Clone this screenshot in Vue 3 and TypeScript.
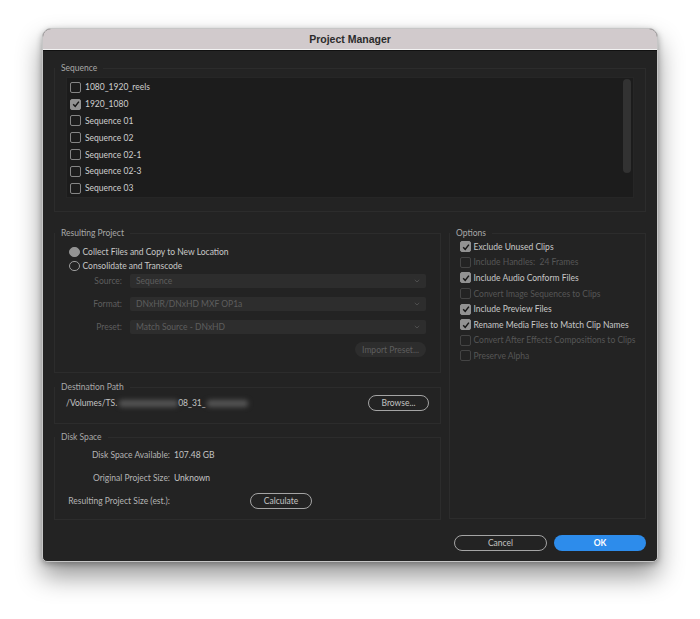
<script setup lang="ts">
interface Opt { label: string; checked: boolean; disabled: boolean }
const sequences = [
  { name: '1080_1920_reels', checked: false },
  { name: '1920_1080', checked: true },
  { name: 'Sequence 01', checked: false },
  { name: 'Sequence 02', checked: false },
  { name: 'Sequence 02-1', checked: false },
  { name: 'Sequence 02-3', checked: false },
  { name: 'Sequence 03', checked: false },
]
const selects = [
  { label: 'Source:', value: 'Sequence' },
  { label: 'Format:', value: 'DNxHR/DNxHD MXF OP1a' },
  { label: 'Preset:', value: 'Match Source - DNxHD' },
]
const options: Opt[] = [
  { label: 'Exclude Unused Clips', checked: true, disabled: false },
  { label: 'Include Handles:  24 Frames', checked: false, disabled: true },
  { label: 'Include Audio Conform Files', checked: true, disabled: false },
  { label: 'Convert Image Sequences to Clips', checked: false, disabled: true },
  { label: 'Include Preview Files', checked: true, disabled: false },
  { label: 'Rename Media Files to Match Clip Names', checked: true, disabled: false },
  { label: 'Convert After Effects Compositions to Clips', checked: false, disabled: true },
  { label: 'Preserve Alpha', checked: false, disabled: true },
]
</script>

<template>
  <div class="page">
    <div class="window">
      <header class="titlebar">Project Manager</header>
      <main class="content">
        <fieldset class="group seq-group">
          <legend>Sequence</legend>
          <div class="list">
            <div class="list-rows">
              <label v-for="s in sequences" :key="s.name" class="seq-row">
                <span class="check" :class="{ on: s.checked }">
                  <svg v-if="s.checked" viewBox="0 0 10 10"><path d="M2.2 5.2 4.2 7.4 7.9 2.6" /></svg>
                </span>
                <span>{{ s.name }}</span>
              </label>
            </div>
            <div class="scroll-thumb"></div>
          </div>
        </fieldset>

        <div class="columns">
          <div class="left">
            <fieldset class="group result-group">
              <legend>Resulting Project</legend>
              <div class="radio-row"><span class="radio on"></span>Collect Files and Copy to New Location</div>
              <div class="radio-row"><span class="radio"></span>Consolidate and Transcode</div>
              <div class="selects">
                <div v-for="s in selects" :key="s.label" class="select-row">
                  <span class="select-label">{{ s.label }}</span>
                  <div class="select">
                    <span>{{ s.value }}</span>
                    <svg viewBox="0 0 8 5"><path d="M1 1 4 3.8 7 1" /></svg>
                  </div>
                </div>
              </div>
              <div class="import-row"><button class="import" disabled>Import Preset...</button></div>
            </fieldset>

            <fieldset class="group dest-group">
              <legend>Destination Path</legend>
              <div class="dest-row">
                <span class="path">/Volumes/TS.</span>
                <span class="smudge s1"></span>
                <span class="path">08_31_</span>
                <span class="smudge s2"></span>
                <button class="btn browse">Browse...</button>
              </div>
            </fieldset>

            <fieldset class="group disk-group">
              <legend>Disk Space</legend>
              <div class="disk-row"><span class="disk-label">Disk Space Available:</span><span>107.48 GB</span></div>
              <div class="disk-row"><span class="disk-label">Original Project Size:</span><span>Unknown</span></div>
              <div class="disk-row"><span class="disk-label">Resulting Project Size (est.):</span><button class="btn calc">Calculate</button></div>
            </fieldset>
          </div>

          <fieldset class="group options-group">
            <legend>Options</legend>
            <div v-for="o in options" :key="o.label" class="opt-row" :class="{ off: o.disabled }">
              <span class="check" :class="{ on: o.checked, dis: o.disabled }">
                <svg v-if="o.checked" viewBox="0 0 10 10"><path d="M2.2 5.2 4.2 7.4 7.9 2.6" /></svg>
              </span>
              <span class="opt-text">{{ o.label }}</span>
            </div>
          </fieldset>
        </div>

        <footer class="footer">
          <button class="btn cancel">Cancel</button>
          <button class="btn ok">OK</button>
        </footer>
      </main>
    </div>
  </div>
</template>

<style>
html, body { margin: 0; background: #fff; }
</style>

<style scoped>
.page {
  width: 700px;
  height: 619px;
  box-sizing: border-box;
  padding: 28px 42px 0;
  background: #fff;
  overflow: hidden;
  font-family: "Lato", "Open Sans", sans-serif;
  font-size: 8.5px;
  color: #c4c4c4;
}
.window {
  width: 616px;
  height: 534px;
  box-sizing: border-box;
  display: flex;
  flex-direction: column;
  border: 1px solid #c6c6c6;
  border-radius: 9px 9px 5px 5px;
  background: #232323;
  overflow: hidden;
  box-shadow: 0 14px 26px rgba(0, 0, 0, .42), 0 2px 6px rgba(0, 0, 0, .3);
}
.titlebar {
  height: 21px;
  flex: none;
  display: flex;
  align-items: center;
  justify-content: center;
  background: #d1cacc;
  border-bottom: 1px solid #f2f2f2;
  box-sizing: border-box;
  font-family: "Liberation Sans", Arial, sans-serif;
  font-weight: 700;
  font-size: 10.5px;
  color: #2b2b2b;
}
.content {
  flex: 1;
  display: flex;
  flex-direction: column;
  padding: 11px 11px 0;
  min-height: 0;
  border-top: 1px solid #111;
}
.group {
  margin: 0;
  min-width: 0;
  border: 1px solid #2c2c2c;
  box-sizing: border-box;
}
.group legend {
  padding: 0 6px;
  font-size: 8.5px;
  line-height: 12px;
  color: #a8a8a8;
}
.seq-group {
  height: 150px;
  padding: 3px 11px 0;
}
.seq-group legend { margin-left: -11px; }
.list {
  display: flex;
  height: 121px;
  box-sizing: border-box;
  background: #1c1c1c;
  border: 1px solid #262626;
  padding: 1px 2px 0 3px;
}
.list-rows {
  flex: 1;
  display: flex;
  flex-direction: column;
}
.seq-row {
  display: flex;
  align-items: center;
  gap: 4px;
  height: 16.8px;
  color: #cfcfcf;
}
.scroll-thumb {
  width: 8px;
  height: 94px;
  border-radius: 4px;
  background: #323232;
}
.check {
  width: 11px;
  height: 11px;
  flex: none;
  box-sizing: border-box;
  border: 1.5px solid #858585;
  border-radius: 2px;
  display: inline-flex;
  align-items: center;
  justify-content: center;
}
.check.on {
  background: #929292;
  border-color: #929292;
}
.check.dis { border-color: #444; }
.check svg { width: 10px; height: 10px; flex: none; }
.check path {
  fill: none;
  stroke: #161616;
  stroke-width: 1.5;
}
.columns {
  display: flex;
  gap: 8px;
  margin-top: 15px;
}
.left {
  width: 387px;
  display: flex;
  flex-direction: column;
}
.result-group {
  height: 146px;
  padding: 6px 14px 0 14px;
}
.result-group legend { margin-left: -14px; }
.radio-row {
  display: flex;
  align-items: center;
  gap: 3px;
  height: 14px;
  color: #c8c8c8;
}
.radio {
  width: 10.5px;
  height: 10.5px;
  box-sizing: border-box;
  border: 1.5px solid #9c9c9c;
  border-radius: 50%;
  flex: none;
}
.radio.on { background: #939393; border-color: #939393; }
.selects {
  display: flex;
  flex-direction: column;
  gap: 9px;
  margin-top: 1px;
}
.select-row {
  display: flex;
  align-items: center;
  height: 14px;
}
.select-label {
  width: 53px;
  text-align: right;
  color: #5e5e5e;
  margin-right: 8px;
  flex: none;
}
.select {
  width: 296px;
  height: 14px;
  box-sizing: border-box;
  background: #2d2d2d;
  border-radius: 2px;
  padding: 0 6px;
  display: flex;
  align-items: center;
  justify-content: space-between;
  color: #5e5e5e;
}
.select svg { width: 6px; height: 4px; }
.select path { fill: none; stroke: #5a5a5a; stroke-width: 1; }
.import-row {
  display: flex;
  justify-content: flex-end;
  margin-top: 8px;
}
.import {
  width: 71px;
  height: 15px;
  padding: 0;
  border: 0;
  border-radius: 8px;
  background: #2d2d2d;
  color: #5e5e5e;
  font: inherit;
}
.dest-group {
  height: 43px;
  margin-top: 8px;
  padding: 2px 11px 0 5px;
}
.dest-group legend { margin-left: -5px; }
.dest-row {
  display: flex;
  align-items: center;
  height: 16px;
  padding-left: 6px;
}
.path { color: #c4c4c4; }
.smudge {
  height: 7px;
  background: #565656;
  border-radius: 3px;
  filter: blur(2.5px);
}
.s1 { width: 59px; margin-left: 2px; }
.s2 { width: 41px; margin-left: 1px; }
.btn {
  height: 16px;
  padding: 0;
  box-sizing: border-box;
  border: 1.5px solid #a4a4a4;
  border-radius: 8px;
  background: transparent;
  color: #c4c4c4;
  font: inherit;
  cursor: default;
}
.browse { width: 61px; margin-left: auto; }
.disk-group {
  height: 89px;
  margin-top: 7px;
  padding: 4px 11px 0 5px;
}
.disk-group legend { margin-left: -5px; }
.disk-row {
  display: flex;
  align-items: center;
  height: 16px;
  margin-bottom: 7px;
}
.disk-label {
  width: 110px;
  margin-right: 4px;
  text-align: right;
  white-space: nowrap;
  flex: none;
  color: #b4b4b4;
}
.calc { width: 62px; margin-left: 76px; }
.options-group {
  width: 197px;
  height: 292px;
  padding: 0 5px 0 10px;
}
.options-group legend { margin-left: -10px; }
.opt-row {
  display: flex;
  align-items: center;
  gap: 2.5px;
  height: 15.6px;
  color: #c8c8c8;
  white-space: pre;
}
.opt-row.off { color: #565656; }
.footer {
  display: flex;
  justify-content: flex-end;
  gap: 7px;
  margin-top: 15px;
}
.cancel { width: 93px; }
.ok {
  width: 92px;
  border: 0;
  background: #2d8ceb;
  color: #fff;
  font-weight: 700;
}
</style>
